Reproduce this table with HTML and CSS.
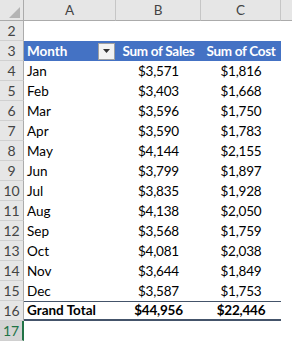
FILE: index.html
```html
<!DOCTYPE html>
<html>
<head>
<meta charset="utf-8">
<link rel="stylesheet" href="styles.css">
</head>
<body>
<div class="sheet">
  <div class="corner"><svg width="11" height="11" viewBox="0 0 11 11"><polygon points="11,0 11,11 0,11" fill="#b4b4b4"/></svg></div>
  <div class="colhead">A</div>
  <div class="colhead">B</div>
  <div class="colhead">C</div>
  <div class="colhead last"></div>

  <div class="rowhead">2</div>
  <div class="cell"></div><div class="cell"></div><div class="cell"></div><div class="cell"></div>

  <div class="rowhead">3</div>
  <div class="cell hdr month"><span>Month</span><span class="filter"><svg width="7" height="4" viewBox="0 0 7 4"><polygon points="0,0 7,0 3.5,4" fill="#333"/></svg></span></div>
  <div class="cell hdr num">Sum of Sales</div>
  <div class="cell hdr num">Sum of Cost</div>
  <div class="cell"></div>

  <div class="rowhead">4</div><div class="cell">Jan</div><div class="cell num">$3,571</div><div class="cell num">$1,816</div><div class="cell"></div>
  <div class="rowhead">5</div><div class="cell">Feb</div><div class="cell num">$3,403</div><div class="cell num">$1,668</div><div class="cell"></div>
  <div class="rowhead">6</div><div class="cell">Mar</div><div class="cell num">$3,596</div><div class="cell num">$1,750</div><div class="cell"></div>
  <div class="rowhead">7</div><div class="cell">Apr</div><div class="cell num">$3,590</div><div class="cell num">$1,783</div><div class="cell"></div>
  <div class="rowhead">8</div><div class="cell">May</div><div class="cell num">$4,144</div><div class="cell num">$2,155</div><div class="cell"></div>
  <div class="rowhead">9</div><div class="cell">Jun</div><div class="cell num">$3,799</div><div class="cell num">$1,897</div><div class="cell"></div>
  <div class="rowhead">10</div><div class="cell">Jul</div><div class="cell num">$3,835</div><div class="cell num">$1,928</div><div class="cell"></div>
  <div class="rowhead">11</div><div class="cell">Aug</div><div class="cell num">$4,138</div><div class="cell num">$2,050</div><div class="cell"></div>
  <div class="rowhead">12</div><div class="cell">Sep</div><div class="cell num">$3,568</div><div class="cell num">$1,759</div><div class="cell"></div>
  <div class="rowhead">13</div><div class="cell">Oct</div><div class="cell num">$4,081</div><div class="cell num">$2,038</div><div class="cell"></div>
  <div class="rowhead">14</div><div class="cell">Nov</div><div class="cell num">$3,644</div><div class="cell num">$1,849</div><div class="cell"></div>
  <div class="rowhead">15</div><div class="cell">Dec</div><div class="cell num">$3,587</div><div class="cell num">$1,753</div><div class="cell"></div>
  <div class="rowhead">16</div><div class="cell total">Grand Total</div><div class="cell total num">$44,956</div><div class="cell total num">$22,446</div><div class="cell"></div>
  <div class="rowhead active">17</div><div class="cell"></div><div class="cell"></div><div class="cell"></div><div class="cell"></div>
</div>
</body>
</html>
```
FILE: styles.css
```css
html, body {
  margin: 0;
  padding: 0;
  background: #fff;
}
.sheet {
  display: grid;
  grid-template-columns: 24px 92px 85px 80px 1fr;
  grid-template-rows: 21px repeat(16, 20px);
  width: 292px;
  height: 341px;
  overflow: hidden;
  font-family: Lato, "Liberation Sans", sans-serif;
  font-size: 13.5px;
  color: #000;
}
.corner {
  background: #e6e6e6;
  border-right: 1px solid #ababab;
  border-bottom: 1px solid #ababab;
  display: flex;
  align-items: flex-end;
  justify-content: flex-end;
  padding: 0 3px 2px 0;
}
.colhead {
  background: #e6e6e6;
  border-right: 1px solid #c6c6c6;
  border-bottom: 1px solid #ababab;
  color: #444;
  text-align: center;
  line-height: 20px;
  font-size: 13.5px;
}
.colhead.last { border-right: none; }
.rowhead {
  background: #e6e6e6;
  border-right: 1px solid #ababab;
  border-bottom: 1px solid #d0d0d0;
  color: #444;
  text-align: center;
  line-height: 20px;
  font-size: 14px;
}
.rowhead.active {
  background: #d4d4d4;
  color: #217346;
  border-right: 2px solid #217346;
}
.cell {
  line-height: 20px;
  padding: 0 3px;
  white-space: nowrap;
  overflow: hidden;
}
.num { text-align: center; padding: 0; letter-spacing: -0.2px; }
.hdr {
  background: #4472c4;
  color: #fff;
  font-weight: bold;
}
.hdr.num { letter-spacing: -0.3px; }
.month {
  display: flex;
  align-items: center;
  justify-content: space-between;
  padding-right: 1px;
}
.filter {
  width: 15px;
  height: 15px;
  background: #f3f3f3;
  border: 1px solid #a0a0a0;
  display: flex;
  align-items: center;
  justify-content: center;
}
.total {
  font-weight: bold;
  border-top: 1px solid #44546a;
  border-bottom: 2px solid #44546a;
  line-height: 17px;
}
```
